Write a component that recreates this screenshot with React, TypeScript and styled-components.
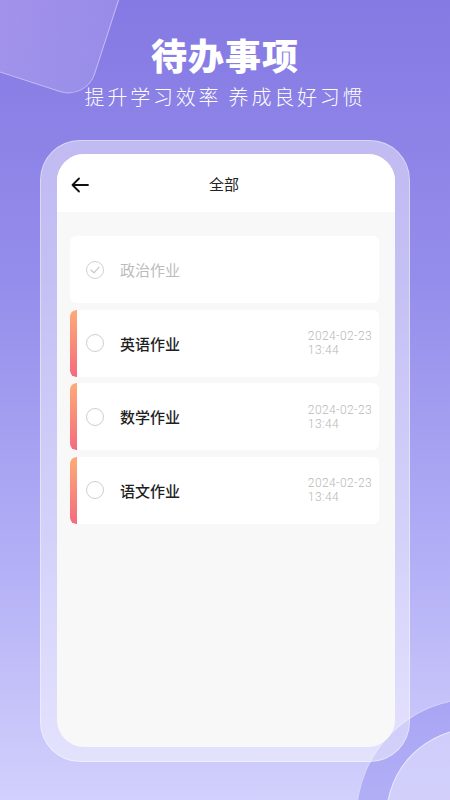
import React from "react";
import styled, { createGlobalStyle } from "styled-components";

interface Task {
    id: number;
    title: string;
    done: boolean;
    time?: [string, string];
}

const tasks: Task[] = [
    { id: 1, title: "政治作业", done: true },
    { id: 2, title: "英语作业", done: false, time: ["2024-02-23", "13:44"] },
    { id: 3, title: "数学作业", done: false, time: ["2024-02-23", "13:44"] },
    { id: 4, title: "语文作业", done: false, time: ["2024-02-23", "13:44"] },
];

const GlobalStyle = createGlobalStyle`
    html, body {
        margin: 0;
        padding: 0;
    }
    body {
        font-family: "Noto Sans CJK SC", "Noto Sans", sans-serif;
    }
`;

const backArrow = (
    <svg width="18" height="16" viewBox="0 0 18 16" fill="none">
        <path
            d="M17 8H2M8 1.5L1.5 8L8 14.5"
            stroke="#111"
            strokeWidth="1.8"
            strokeLinecap="round"
            strokeLinejoin="round"
        />
    </svg>
);

function App() {
    return (
        <Page>
            <GlobalStyle />
            <Glass />
            <BigCircle />
            <SmallCircle />
            <Title>待办事项</Title>
            <Subtitle>提升学习效率 养成良好习惯</Subtitle>
            <Frame>
                <Screen>
                    <NavBar>
                        <BackButton>{backArrow}</BackButton>
                        <NavTitle>全部</NavTitle>
                    </NavBar>
                    <List>
                        {tasks.map((task) => (
                            <Card key={task.id}>
                                {!task.done && <Stripe />}
                                <Check $done={task.done}>
                                    {task.done && (
                                        <svg width="10" height="8" viewBox="0 0 10 8" fill="none">
                                            <path
                                                d="M1 4L4 6.8L9 1.2"
                                                stroke="#c8c8c8"
                                                strokeWidth="1.2"
                                                strokeLinecap="round"
                                                strokeLinejoin="round"
                                            />
                                        </svg>
                                    )}
                                </Check>
                                <TaskName $done={task.done}>{task.title}</TaskName>
                                {task.time && (
                                    <Time>
                                        <span>{task.time[0]}</span>
                                        <span>{task.time[1]}</span>
                                    </Time>
                                )}
                            </Card>
                        ))}
                    </List>
                </Screen>
            </Frame>
        </Page>
    );
}

const Page = styled.div`
    position: relative;
    width: 450px;
    height: 800px;
    overflow: hidden;
    display: flex;
    flex-direction: column;
    align-items: center;
    background: linear-gradient(180deg, #8579e3 0%, #958deb 35%, #b3aff6 70%, #d2d0fc 100%);
`;

const Glass = styled.div`
    position: absolute;
    left: -63px;
    top: -105px;
    width: 180px;
    height: 180px;
    border-radius: 28px;
    transform: rotate(18deg);
    background: linear-gradient(110deg, rgba(205, 175, 248, 0.6), rgba(255, 255, 255, 0.12));
    border: 1px solid rgba(255, 255, 255, 0.35);
`;

const BigCircle = styled.div`
    position: absolute;
    left: 356px;
    top: 698px;
    width: 236px;
    height: 236px;
    border-radius: 50%;
    background: rgba(118, 112, 236, 0.35);
    border: 1px solid rgba(255, 255, 255, 0.5);
`;

const SmallCircle = styled.div`
    position: absolute;
    left: 386px;
    top: 728px;
    width: 176px;
    height: 176px;
    border-radius: 50%;
    background: rgba(232, 230, 255, 0.6);
    border: 1px solid rgba(255, 255, 255, 0.55);
`;

const Title = styled.h1`
    position: relative;
    margin: 31px 0 0;
    font-size: 36px;
    line-height: 46px;
    font-weight: 900;
    letter-spacing: 1px;
    color: #fff;
`;

const Subtitle = styled.p`
    position: relative;
    margin: 6px 0 0;
    font-size: 20px;
    line-height: 28px;
    font-weight: 300;
    letter-spacing: 2.8px;
    color: #fff;
`;

const Frame = styled.div`
    position: relative;
    z-index: 1;
    box-sizing: border-box;
    width: 370px;
    height: 622px;
    margin-top: 29px;
    padding: 13px 14px 14px 16px;
    border-radius: 40px;
    background: rgba(255, 255, 255, 0.45);
    border: 1px solid rgba(255, 255, 255, 0.4);
`;

const Screen = styled.div`
    height: 100%;
    border-radius: 27px;
    overflow: hidden;
    background: #f8f8f8;
`;

const NavBar = styled.div`
    position: relative;
    height: 58px;
    display: flex;
    align-items: center;
    justify-content: center;
    background: #fff;
`;

const BackButton = styled.div`
    position: absolute;
    left: 14px;
    top: 23px;
    display: flex;
`;

const NavTitle = styled.span`
    font-size: 15px;
    color: #222;
    margin-left: -4px;
`;

const List = styled.div`
    display: flex;
    flex-direction: column;
    gap: 6.5px;
    padding: 24px 16px 0 13px;
`;

const Card = styled.div`
    display: flex;
    align-items: center;
    height: 67px;
    border-radius: 6px;
    background: #fff;
    overflow: hidden;
`;

const Stripe = styled.div`
    align-self: stretch;
    width: 7px;
    border-radius: 6px 0 0 6px;
    background: linear-gradient(180deg, #fdab79 0%, #f8857a 60%, #f46a80 100%);
`;

const Check = styled.div<{ $done: boolean }>`
    box-sizing: border-box;
    width: 18px;
    height: 18px;
    margin-left: ${(props) => (props.$done ? "16px" : "9px")};
    border-radius: 50%;
    border: 1px solid ${(props) => (props.$done ? "#d2d2d2" : "#cfcfcf")};
    display: flex;
    align-items: center;
    justify-content: center;
`;

const TaskName = styled.span<{ $done: boolean }>`
    flex: 1;
    margin-left: 16px;
    font-size: 15px;
    font-weight: ${(props) => (props.$done ? 400 : 500)};
    color: ${(props) => (props.$done ? "#bcbcbc" : "#1f1f1f")};
`;

const Time = styled.div`
    display: flex;
    flex-direction: column;
    margin-right: 7px;
    font-family: Roboto, "Noto Sans", sans-serif;
    font-size: 12px;
    font-weight: 300;
    line-height: 14px;
    letter-spacing: 0.4px;
    color: #b8b8b8;
`;

export default App;
